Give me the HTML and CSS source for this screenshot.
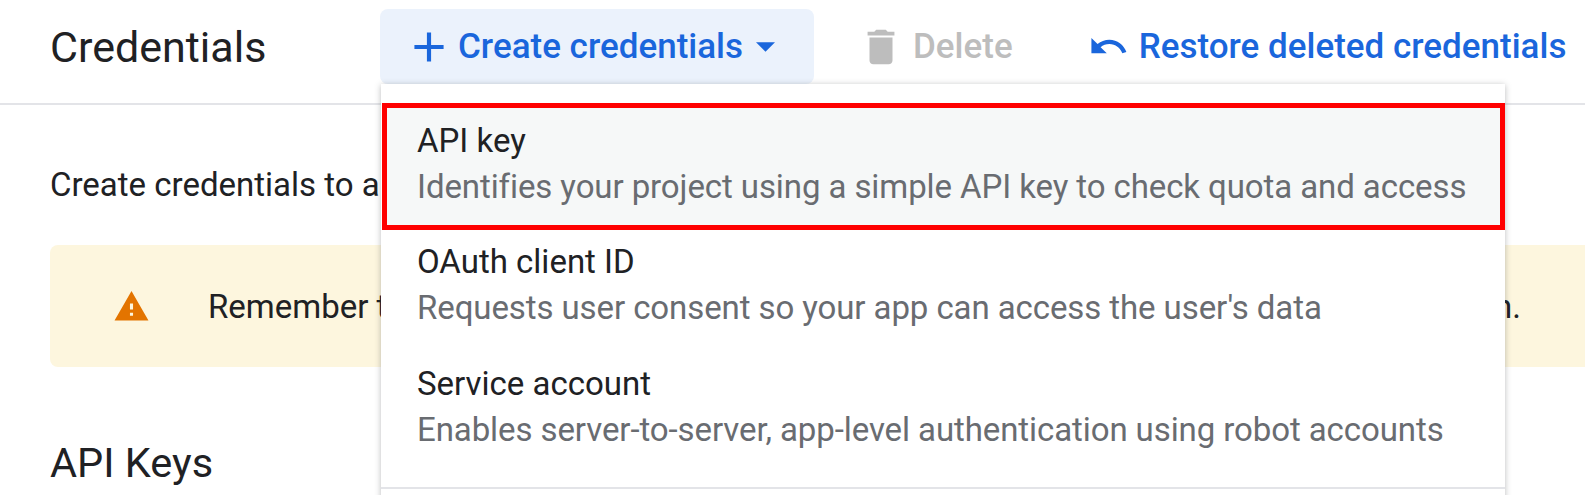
FILE: index.html
```html
<!DOCTYPE html>
<html lang="en">
<head>
    <meta charset="UTF-8">
    <title>Credentials</title>
    <link rel="stylesheet" href="styles.css">
</head>
<body>
    <header class="toolbar">
        <h1 class="page-title">Credentials</h1>
        <button class="btn btn-create">
            <svg class="icon" viewBox="0 0 24 24"><path d="M19 13h-6v6h-2v-6H5v-2h6V5h2v6h6z"/></svg>
            Create credentials
            <svg class="caret" viewBox="0 0 10 5"><path d="M0 0l5 5 5-5z"/></svg>
        </button>
        <button class="btn btn-delete">
            <svg class="icon" viewBox="0 0 24 24"><path d="M6 19c0 1.1.9 2 2 2h8c1.100 0 2-.9 2-2V7H6v12zM19 4h-3.500l-1-1h-5l-1 1H5v2h14V4z"/></svg>
            Delete
        </button>
        <button class="btn btn-restore">
            <svg class="icon" viewBox="0 0 24 24"><path d="M12.500 8c-2.650 0-5.050.99-6.900 2.600L2 7v9h9l-3.620-3.620c1.390-1.160 3.160-1.880 5.120-1.880 3.540 0 6.550 2.310 7.600 5.500l2.370-.78C21.080 11.030 17.150 8 12.500 8z"/></svg>
            Restore deleted credentials
        </button>
    </header>

    <main class="content">
        <p class="intro">Create credentials to a</p>
        <div class="notice">
            <svg class="notice-icon" viewBox="0 0 24 24"><path d="M1 21h22L12 2 1 21zm12-3h-2v-2h2v2zm0-4h-2v-4h2v4z"/></svg>
            <span>Remember t</span>
            <span class="notice-end">n.</span>
        </div>
        <h2 class="section-title">API Keys</h2>
    </main>

    <!-- dropdown for the create button -->
    <div class="menu">
        <div class="menu-item selected">
            <div class="item-name">API key</div>
            <div class="item-desc">Identifies your project using a simple API key to check quota and access</div>
        </div>
        <div class="menu-item">
            <div class="item-name">OAuth client ID</div>
            <div class="item-desc">Requests user consent so your app can access the user's data</div>
        </div>
        <div class="menu-item">
            <div class="item-name">Service account</div>
            <div class="item-desc">Enables server-to-server, app-level authentication using robot accounts</div>
        </div>
        <div class="menu-divider"></div>
    </div>
</body>
</html>
```

FILE: styles.css
```css
body {
    margin: 0;
    height: 495px;
    overflow: hidden;
    position: relative;
    background: #fff;
    font-family: Roboto, "Liberation Sans", sans-serif;
    color: #202124;
}

.toolbar {
    display: flex;
    align-items: center;
    height: 103px;
    padding: 0 0 0 50px;
    border-bottom: 2px solid #e3e4e8;
}

.page-title {
    width: 330px;
    margin: 0;
    position: relative;
    top: -5px;
    font-size: 43px;
    font-weight: 400;
}

.btn {
    display: flex;
    align-items: center;
    border: none;
    background: none;
    font-family: inherit;
    font-size: 35px;
    font-weight: 500;
    color: #1a66dc;
    white-space: nowrap;
    position: relative;
    top: -5px;
}

.icon {
    flex: none;
    width: 46px;
    height: 46px;
    fill: currentColor;
}

.btn-create {
    width: 434px;
    height: 75px;
    padding: 0 0 0 24px;
    gap: 4px;
    background: #ebf2fc;
    border-radius: 8px;
}

.btn-create .icon {
    width: 50px;
    height: 50px;
}

.caret {
    width: 19px;
    height: 10px;
    margin-left: 9px;
    fill: currentColor;
}

.btn-delete {
    margin-left: 44px;
    padding: 0;
    gap: 9px;
    color: #bdbdbd;
}

.btn-restore {
    margin-left: 75px;
    padding: 0;
    gap: 10px;
}

.btn-restore .icon {
    width: 41px;
    height: 41px;
}

.content {
    padding: 0 50px;
}

.intro {
    margin: 60px 0 0;
    font-size: 33px;
}

.notice {
    display: flex;
    align-items: center;
    height: 122px;
    margin: 41px -58px 0 0;
    padding-left: 63px;
    gap: 58px;
    background: #fdf6de;
    border-radius: 8px;
    font-size: 33px;
    white-space: nowrap;
}

.notice-end {
    margin-left: auto;
    margin-right: 72px;
}

.notice-icon {
    flex: none;
    width: 37px;
    height: 37px;
    fill: #e37400;
}

.section-title {
    margin: 71px 0 0;
    font-size: 41.5px;
    font-weight: 400;
}

.menu {
    position: absolute;
    left: 381px;
    top: 84px;
    width: 1124px;
    height: 430px;
    padding-top: 19px;
    box-sizing: border-box;
    background: #fff;
    box-shadow: 0 1px 6px rgba(60, 64, 67, 0.35);
}

.menu-item {
    height: 122px;
    padding: 9px 0 0 36px;
    box-sizing: border-box;
}

.menu-item.selected {
    height: 127px;
    margin-left: 1px;
    padding: 10px 0 0 30px;
    border: 5px solid #ff0000;
    background: #f6f8f8;
}

.item-name {
    font-size: 33px;
    line-height: 46px;
}

.item-desc {
    font-size: 33px;
    line-height: 46px;
    letter-spacing: -0.09px;
    color: #696c71;
}

.menu-divider {
    margin-top: 13px;
    height: 2px;
    background: #e3e4e8;
}
```
